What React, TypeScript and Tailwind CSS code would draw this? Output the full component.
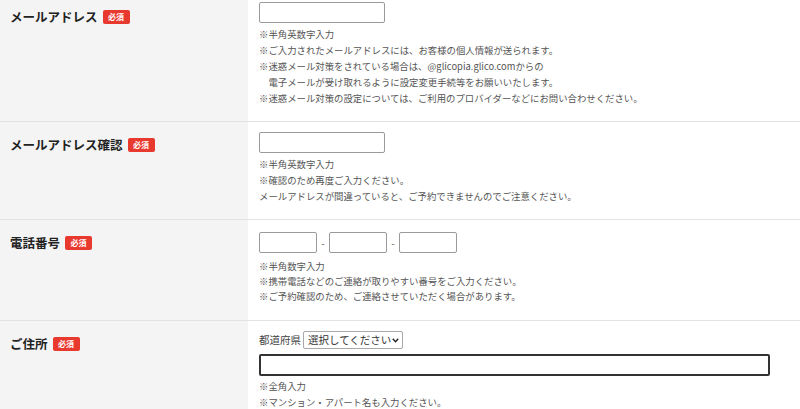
import React from 'react';

const font = { fontFamily: '"Noto Sans CJK JP", "Noto Sans", sans-serif' };

const Badge = () => (
  <span className="ml-[5px] inline-flex h-[14px] w-[27px] items-center justify-center rounded-[2px] bg-[#e8392f] text-[8px] font-bold leading-none text-white">
    必須
  </span>
);

const Label = ({ text }: { text: string }) => (
  <div className="flex items-center text-[12.5px] font-bold leading-[18px] text-[#222]">
    {text}
    <Badge />
  </div>
);

const Notes = ({ lines, className = '' }: { lines: string[]; className?: string }) => (
  <div className={`text-[9.4px] text-[#555] ${className}`}>
    {lines.map((l, i) => (
      <p key={i} className="whitespace-pre">{l}</p>
    ))}
  </div>
);

const TextBox = ({ w }: { w: string }) => (
  <input
    type="text"
    className={`block ${w} h-[21px] rounded-[2px] border border-[#9a9a9a] bg-white px-1 text-xs outline-none`}
  />
);

const App = () => {
  return (
    <div className="w-[800px] bg-white" style={font}>
      {/* mail */}
      <div className="flex border-b border-[#e2e2e2]">
        <div className="w-[248px] shrink-0 bg-[#f4f4f4] pl-[10px] pt-[8px]">
          <Label text="メールアドレス" />
        </div>
        <div className="flex-1 pb-[15px] pl-[11px] pt-[2px]">
          <TextBox w="w-[126px]" />
          <Notes
            className="mt-[3px] leading-[16px]"
            lines={[
              '※半角英数字入力',
              '※ご入力されたメールアドレスには、お客様の個人情報が送られます。',
              '※迷惑メール対策をされている場合は、@glicopia.glico.comからの',
              '　電子メールが受け取れるように設定変更手続等をお願いいたします。',
              '※迷惑メール対策の設定については、ご利用のプロバイダーなどにお問い合わせください。',
            ]}
          />
        </div>
      </div>

      {/* mail confirm */}
      <div className="flex border-b border-[#e2e2e2]">
        <div className="w-[248px] shrink-0 bg-[#f4f4f4] pl-[10px] pt-[14px]">
          <Label text="メールアドレス確認" />
        </div>
        <div className="flex-1 pb-[15px] pl-[11px] pt-[10px]">
          <TextBox w="w-[126px]" />
          <Notes
            className="mt-[3px] leading-[16px]"
            lines={[
              '※半角英数字入力',
              '※確認のため再度ご入力ください。',
              'メールアドレスが間違っていると、ご予約できませんのでご注意ください。',
            ]}
          />
        </div>
      </div>

      {/* phone */}
      <div className="flex border-b border-[#e2e2e2]">
        <div className="w-[248px] shrink-0 bg-[#f4f4f4] pl-[10px] pt-[14px]">
          <Label text="電話番号" />
        </div>
        <div className="flex-1 pb-[16px] pl-[11px] pt-[12px]">
          <div className="flex h-[21px] items-center">
            <TextBox w="w-[58px]" />
            <span className="w-[12px] text-center text-[10px] leading-none text-[#666]">-</span>
            <TextBox w="w-[58px]" />
            <span className="w-[12px] text-center text-[10px] leading-none text-[#666]">-</span>
            <TextBox w="w-[58px]" />
          </div>
          <Notes
            className="mt-[6px] leading-[15px]"
            lines={[
              '※半角数字入力',
              '※携帯電話などのご連絡が取りやすい番号をご入力ください。',
              '※ご予約確認のため、ご連絡させていただく場合があります。',
            ]}
          />
        </div>
      </div>

      {/* address */}
      <div className="flex">
        <div className="w-[248px] shrink-0 bg-[#f4f4f4] pb-[40px] pl-[10px] pt-[14px]">
          <Label text="ご住所" />
        </div>
        <div className="flex-1 pl-[11px] pt-[10px]">
          <div className="flex h-[18px] items-center gap-[2px] text-[10.5px] text-[#444]">
            <span>都道府県</span>
            <div className="relative">
              <select className="block h-[18px] w-[100px] appearance-none rounded-[2px] border border-[#a8a8a8] bg-white pl-[4px] text-[10.5px] text-[#333] outline-none">
                <option>選択してください</option>
              </select>
              <svg
                className="pointer-events-none absolute right-[4px] top-[7px]"
                width="7"
                height="5"
                viewBox="0 0 7 5"
              >
                <path d="M0.8 0.8 L3.5 3.8 L6.2 0.8" fill="none" stroke="#222" strokeWidth="1.4" />
              </svg>
            </div>
          </div>
          <input
            type="text"
            className="mt-[5px] block h-[22px] w-[511px] rounded-[2px] border-2 border-[#333] bg-white px-1 text-xs outline-none"
          />
          <Notes
            className="mt-[2px] leading-[16px]"
            lines={['※全角入力', '※マンション・アパート名も入力ください。']}
          />
        </div>
      </div>
    </div>
  );
};

export default App;
